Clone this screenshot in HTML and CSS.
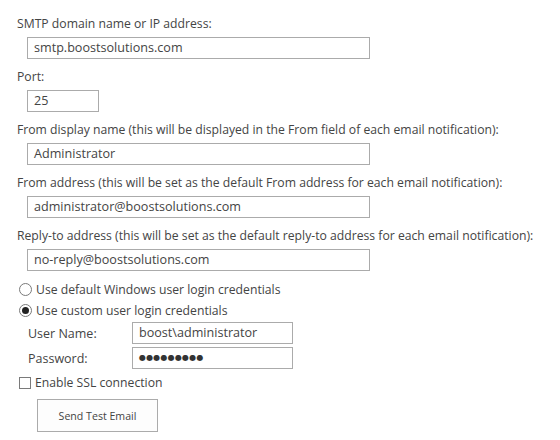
FILE: index.html
```html
<!DOCTYPE html>
<html>
<head>
<meta charset="utf-8">
<link rel="stylesheet" href="styles.css">
</head>
<body>
<div class="form">
  <div class="field">
    <div class="label">SMTP domain name or IP address:</div>
    <div class="input wide">smtp.boostsolutions.com</div>
  </div>
  <div class="field">
    <div class="label">Port:</div>
    <div class="input port">25</div>
  </div>
  <div class="field">
    <div class="label">From display name (this will be displayed in the From field of each email notification):</div>
    <div class="input wide">Administrator</div>
  </div>
  <div class="field">
    <div class="label">From address (this will be set as the default From address for each email notification):</div>
    <div class="input wide">administrator@boostsolutions.com</div>
  </div>
  <div class="field">
    <div class="label">Reply-to address (this will be set as the default reply-to address for each email notification):</div>
    <div class="input wide">no-reply@boostsolutions.com</div>
  </div>
  <div class="options">
    <div class="option"><span class="radio"></span><span>Use default Windows user login credentials</span></div>
    <div class="option"><span class="radio checked"></span><span>Use custom user login credentials</span></div>
  </div>
  <div class="creds">
    <div class="cred-row"><span class="cred-label">User Name:</span><div class="input cred">boost\administrator</div></div>
    <div class="cred-row"><span class="cred-label">Password:</span><div class="input cred pw">●●●●●●●●●</div></div>
  </div>
  <div class="option check-opt"><span class="checkbox"></span><span>Enable SSL connection</span></div>
  <div class="actions"><div class="button">Send Test Email</div></div>
</div>
</body>
</html>
```
FILE: styles.css
```css
html, body {
  margin: 0;
  padding: 0;
  background: #ffffff;
}
.form {
  padding: 14px 0 0 17px;
  font-family: "Open Sans", "Noto Sans", sans-serif;
  font-size: 12.2px;
  color: #444444;
}
.field {
  margin-bottom: 8px;
}
.label {
  height: 20px;
  line-height: 20px;
  white-space: nowrap;
}
.input {
  box-sizing: border-box;
  height: 22px;
  border: 1px solid #ababab;
  margin-left: 10px;
  margin-top: 3px;
  padding: 0 6px;
  line-height: 20px;
  font-size: 12.6px;
  color: #444444;
  white-space: nowrap;
}
.wide { width: 343px; }
.port { width: 72px; }
.options {
  margin-top: 2px;
}
.option {
  display: flex;
  align-items: center;
  height: 21px;
  margin-left: 2px;
  gap: 4px;
}
.radio {
  box-sizing: border-box;
  width: 13px;
  height: 13px;
  border: 1px solid #7a7a7a;
  border-radius: 50%;
  display: flex;
  align-items: center;
  justify-content: center;
}
.radio.checked::after {
  content: "";
  width: 7px;
  height: 7px;
  border-radius: 50%;
  background: #222222;
}
.creds {
  margin-left: 11px;
  margin-top: 1px;
}
.cred-row {
  display: flex;
  align-items: center;
  margin-bottom: 3px;
}
.cred-label {
  width: 104px;
  font-size: 12.5px;
}
.cred {
  margin: 0;
  width: 161px;
}
.pw {
  font-family: "DejaVu Sans", sans-serif;
  font-size: 8px;
  letter-spacing: 0.2px;
  line-height: 20px;
  color: #333333;
}
.checkbox {
  box-sizing: border-box;
  width: 12px;
  height: 12px;
  border: 1px solid #7a7a7a;
  background: #fff;
}
.check-opt { margin-top: 3px; }
.actions {
  margin-top: 6px;
  margin-left: 20px;
}
.button {
  box-sizing: border-box;
  width: 121px;
  height: 33px;
  border: 1px solid #ababab;
  background: #fdfdfd;
  display: flex;
  align-items: center;
  justify-content: center;
  font-size: 10.6px;
  color: #444444;
}
```
